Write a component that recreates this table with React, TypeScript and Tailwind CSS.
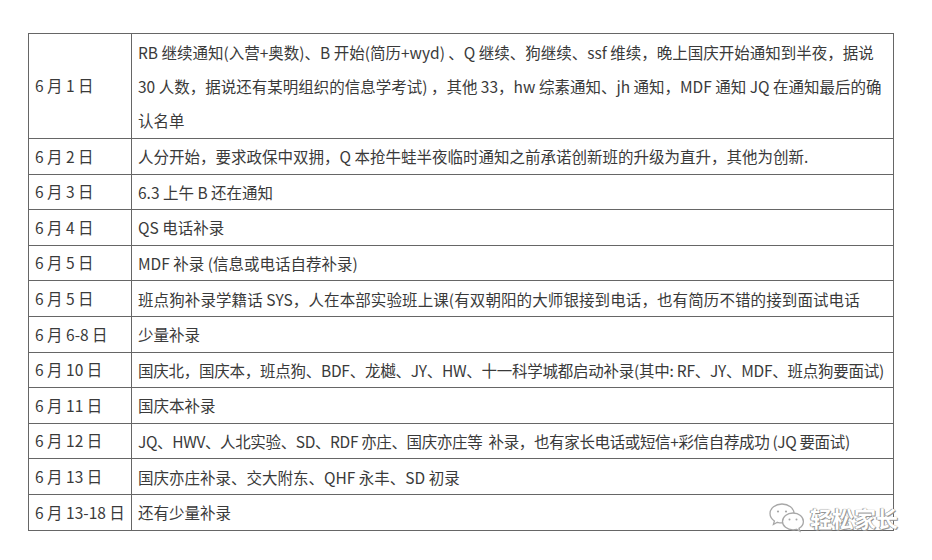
import React from "react";

type Row = { date: string; lines: string[]; tracking?: string };

const rows: Row[] = [
  {
    date: "6 月 1 日",
    lines: [
      "RB 继续通知(入营+奥数)、B 开始(简历+wyd) 、Q 继续、狗继续、ssf 维续，晚上国庆开始通知到半夜，据说",
      "30 人数，据说还有某明组织的信息学考试) ，其他 33，hw 综素通知、jh 通知，MDF 通知 JQ 在通知最后的确",
      "认名单",
    ],
  },
  { date: "6 月 2 日", lines: ["人分开始，要求政保中双拥，Q 本抢牛蛙半夜临时通知之前承诺创新班的升级为直升，其他为创新."] },
  { date: "6 月 3 日", lines: ["6.3 上午 B 还在通知"] },
  { date: "6 月 4 日", lines: ["QS 电话补录"] },
  { date: "6 月 5 日", lines: ["MDF 补录 (信息或电话自荐补录)"] },
  {
    date: "6 月 5 日",
    lines: ["班点狗补录学籍话 SYS，人在本部实验班上课(有双朝阳的大师银接到电话，也有简历不错的接到面试电话"],
    tracking: "tracking-[0.1px]",
  },
  { date: "6 月 6-8 日", lines: ["少量补录"] },
  {
    date: "6 月 10 日",
    lines: ["国庆北，国庆本，班点狗、BDF、龙樾、JY、HW、十一科学城都启动补录(其中: RF、JY、MDF、班点狗要面试)"],
    tracking: "tracking-[-0.25px]",
  },
  { date: "6 月 11 日", lines: ["国庆本补录"] },
  {
    date: "6 月 12 日",
    lines: ["JQ、HWV、人北实验、SD、RDF 亦庄、国庆亦庄等  补录，也有家长电话或短信+彩信自荐成功 (JQ 要面试)"],
    tracking: "tracking-[-0.36px]",
  },
  { date: "6 月 13 日", lines: ["国庆亦庄补录、交大附东、QHF 永丰、SD 初录"] },
  { date: "6 月 13-18 日", lines: ["还有少量补录"] },
];

function WeChatMark() {
  return (
    <svg width="38" height="32" viewBox="0 0 38 32" fill="none">
      <path
        d="M14 3C7.4 3 2 7.3 2 12.6c0 3 1.7 5.6 4.4 7.4L5.4 23.5l4-2.2c1.4.4 3 .6 4.6.6.4 0 .8 0 1.2-.1"
        stroke="#a8a8a8"
        strokeWidth="1.3"
        fill="#fff"
      />
      <path d="M14 3c6.6 0 12 4.3 12 9.6" stroke="#a8a8a8" strokeWidth="1.3" />
      <circle cx="10" cy="10.5" r="1.1" fill="#a8a8a8" />
      <circle cx="18" cy="10.5" r="1.1" fill="#a8a8a8" />
      <path
        d="M25 12c-6 0-10.5 3.8-10.5 8.4s4.5 8.4 10.5 8.4c1.2 0 2.4-.2 3.5-.5l3.4 1.9-.9-3c2.6-1.5 4.4-4 4.4-6.8C35.4 15.8 31 12 25 12z"
        stroke="#a8a8a8"
        strokeWidth="1.3"
        fill="#fff"
      />
      <circle cx="21.5" cy="18.5" r="1" fill="#a8a8a8" />
      <circle cx="28.5" cy="18.5" r="1" fill="#a8a8a8" />
    </svg>
  );
}

export default function App() {
  return (
    <div className="relative h-[560px] w-[932px] bg-white font-['Noto_Sans_CJK_SC',sans-serif] text-[15.5px] text-[#3a3a3a]">
      <div className="pl-[28px] pt-[33px]">
        <table className="w-[866px] table-fixed border-collapse">
          <colgroup>
            <col className="w-[103px]" />
            <col />
          </colgroup>
          <tbody>
            {rows.map((row, i) => (
              <tr key={i}>
                <td
                  className={`border border-[#666] pl-[6px] align-middle whitespace-nowrap ${
                    row.lines.length > 1 ? "h-[105px]" : "h-[35.6px]"
                  }`}
                >
                  {row.date}
                </td>
                <td className="border border-[#666] pl-[6px] pr-1 align-middle">
                  {row.lines.map((line, j) => (
                    <div key={j} className={`whitespace-pre leading-[34px] ${row.tracking ?? ""}`}>
                      {line}
                    </div>
                  ))}
                </td>
              </tr>
            ))}
          </tbody>
        </table>
      </div>

      <div className="absolute left-[768px] top-[501px] flex items-center gap-[4px]">
        <WeChatMark />
        <span className="text-[22px] font-bold leading-none text-white [text-shadow:0_0_1px_#777,1px_1px_0_#999,-1px_0_0_#aaa]">
          轻松家长
        </span>
      </div>
    </div>
  );
}
